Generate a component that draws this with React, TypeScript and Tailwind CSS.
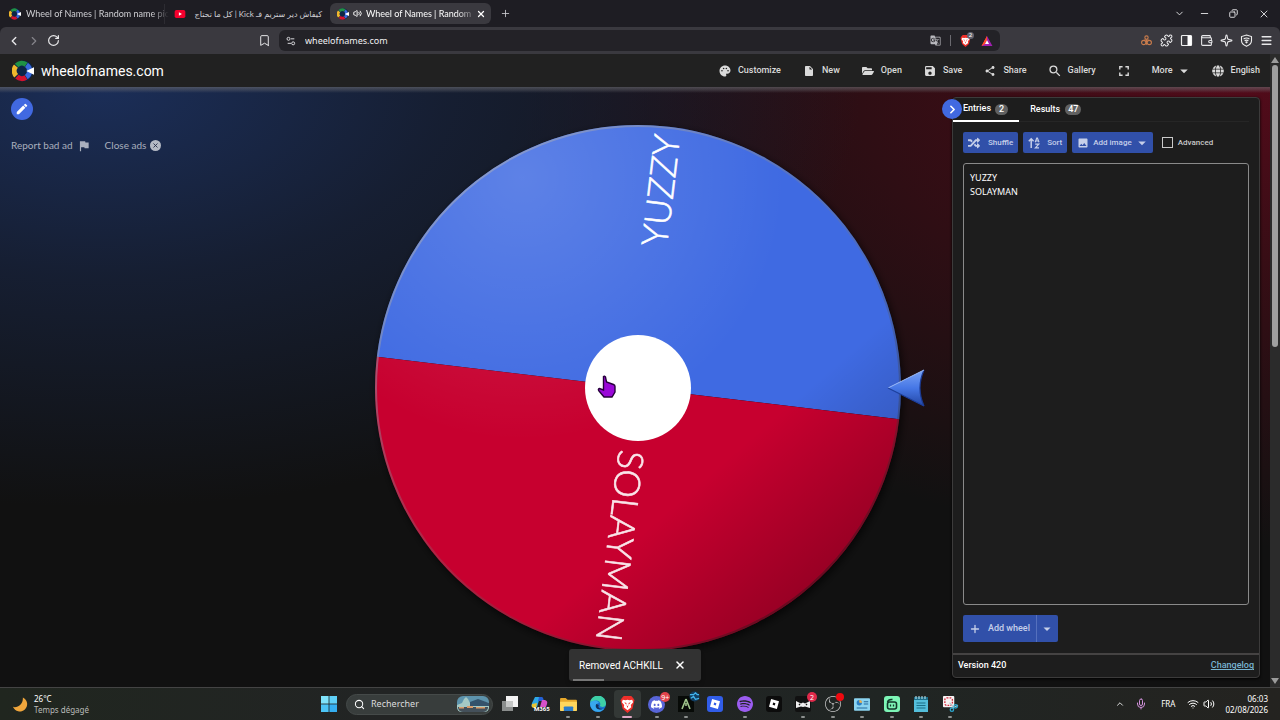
import type { ReactNode } from "react";
import {
  Bookmark,
  ChevronDown,
  ChevronLeft,
  ChevronRight,
  ChevronUp,
  Copy,
  Menu,
  Mic,
  Minus,
  Plus,
  Puzzle,
  RotateCw,
  Search,
  Sparkle,
  Volume2,
  Wallet,
  Wifi,
  X,
} from "lucide-react";
import {
  MdArrowDropDown,
  MdEdit,
  MdFlag,
  MdFullscreen,
  MdGTranslate,
  MdImage,
  MdInsertDriveFile,
  MdPalette,
  MdSave,
  MdSearch,
  MdShare,
} from "react-icons/md";
import { FaFolderOpen, FaGlobe, FaRandom } from "react-icons/fa";
import { SiDiscord, SiObsstudio, SiRoblox, SiSpotify } from "react-icons/si";

function WheelLogo({ className }: { className: string }) {
  return (
    <svg viewBox="0 0 24 24" className={className} aria-hidden="true">
      <circle cx="12" cy="12" r="11.5" fill="#0c2547" />
      <g fill="none" strokeWidth="5.5">
        <path d="M4.3 6.6A8 8 0 0 0 4.6 17.2" stroke="#f0b72c" />
        <path d="M5 5.9A8 8 0 0 1 15.4 5" stroke="#1f9246" />
        <path d="M5.4 18.2A8 8 0 0 0 15.2 19" stroke="#d3122d" />
        <path d="M15.8 5.3A8 8 0 0 1 15.6 18.6" stroke="#3969dd" />
      </g>
      <path d="M15.5 12 24 8v8z" fill="#fff" />
    </svg>
  );
}

function BraveLion({ className }: { className: string }) {
  return (
    <svg viewBox="0 0 16 18" className={className} aria-label="Brave" role="img">
      <path d="M4 0h8l2 2 1.5 2.5L15 6l-1.8 7.5L8 18l-5.2-4.5L1 6 .5 4.5 2 2z" fill="#ee2f2a" />
      <path d="M3 4l3 .5L8 4l2 .5 3-.5 1 2.5-2.5 3 .5 2.5L8 15l-4-3 .5-2.5L2 6.5z" fill="#fff" />
      <path d="M4.5 6.5 7 7.5l-.7 2L8 10.5l1.7-1-.7-2 2.5-1L9 9.5 8 13l-1-3.5z" fill="#ee2f2a" />
    </svg>
  );
}

function TabStrip() {
  return (
    <div className="flex h-[27px] items-center bg-[#1e1d23] pl-1 text-[9px] text-[#cfcfd3]">
      <div className="flex min-w-0 items-center gap-[2px]">
        <div className="flex h-5 w-[161px] items-center gap-[5px] border-r border-[#2d2c32] pl-[5px]">
          <WheelLogo className="size-3 shrink-0" />
          <span className="font-[Lato,sans-serif] whitespace-nowrap [mask-image:linear-gradient(to_right,black_88%,transparent)]">
            Wheel of Names | Random name pic
          </span>
        </div>
        <div className="flex h-5 w-[161px] items-center gap-1 pr-[6px] pl-[7px]">
          <svg viewBox="0 0 12 9" className="h-2 w-3 shrink-0" aria-hidden="true">
            <rect width="12" height="9" rx="2" fill="#f4002d" />
            <path d="M4.7 2.4v4.2L8.2 4.5z" fill="#fff" />
          </svg>
          <span
            dir="rtl"
            className="min-w-0 flex-1 font-[Lato,'DejaVu_Sans',sans-serif] text-[8px] whitespace-nowrap"
          >
            كيفاش دير ستريم فـ Kick | كل ما تحتاج
          </span>
        </div>
        <div className="flex h-[21px] w-[161px] items-center gap-1 rounded-md bg-[#3a393f] pr-[5px] pl-[7px] text-white">
          <WheelLogo className="size-3 shrink-0" />
          <Volume2 className="size-[9px] shrink-0" strokeWidth={2.5} />
          <span className="min-w-0 flex-1 font-[Lato,sans-serif] whitespace-nowrap [mask-image:linear-gradient(to_right,black_85%,transparent_105%)]">
            Wheel of Names | Random na
          </span>
          <button aria-label="Close tab">
            <X className="size-[10px]" strokeWidth={3} />
          </button>
        </div>
        <button aria-label="New tab" className="ml-[7px]">
          <Plus className="size-[11px]" strokeWidth={1.8} />
        </button>
      </div>
      <div className="ml-auto flex items-center pr-[10px] text-[#e4e4e6]">
        <button aria-label="Search tabs"><ChevronDown className="size-[11px]" /></button>
        <button aria-label="Minimize" className="ml-[14px]"><Minus className="size-[11px]" /></button>
        <button aria-label="Restore" className="ml-[19px]"><Copy className="size-[9px] -scale-x-100" strokeWidth={2.5} /></button>
        <button aria-label="Close window" className="ml-[20px]"><X className="size-[12px]" strokeWidth={1.8} /></button>
      </div>
    </div>
  );
}

function AddressBar() {
  return (
    <div className="grid h-[27px] grid-cols-[279fr_721fr_280fr] items-center rounded-t-md bg-[#3a393f] text-[#e8e8ea]">
      <div className="flex items-center gap-[6px] pr-2 pl-[7px]">
        <button aria-label="Back"><ChevronLeft className="size-[14px]" strokeWidth={2.4} /></button>
        <button aria-label="Forward" className="text-[#85848a]"><ChevronRight className="size-[14px]" /></button>
        <button aria-label="Reload"><RotateCw className="size-[13px]" strokeWidth={2.2} /></button>
        <button aria-label="Bookmark" className="ml-auto"><Bookmark className="size-[13px]" strokeWidth={1.8} /></button>
      </div>
      <div className="flex h-[21px] items-center rounded-md bg-[#232227] pr-[6px] pl-[7px]">
        <svg viewBox="0 0 12 12" className="size-[10px]" fill="none" stroke="#d8d8dc" strokeWidth="1.2" aria-hidden="true">
          <circle cx="3" cy="3.4" r="1.8" />
          <path d="M6 3.4h4M2 8.8h4" />
          <circle cx="8.6" cy="8.8" r="1.8" />
        </svg>
        <input
          aria-label="Address"
          defaultValue="wheelofnames.com"
          className="ml-[9px] min-w-0 flex-1 bg-transparent text-[9px] text-[#f1f1f3] outline-none"
        />
        <MdGTranslate className="size-[11px] text-[#b9b9be]" />
        <span className="mx-[9px] h-[11px] w-px bg-[#6b6a70]" />
        <span className="relative">
          <BraveLion className="h-[12px] w-[11px]" />
          <span className="absolute -top-[3px] left-[7px] flex size-[7px] items-center justify-center rounded-full bg-[#62636f] text-[6px] text-white">
            2
          </span>
        </span>
        <svg viewBox="0 0 12 11" className="mr-[1px] ml-[10px] h-[10px] w-[12px]" aria-hidden="true">
          <path d="M6 0 0 11h6V7.8z" fill="#f0432d" />
          <path d="M6 0l6 11H0l3.6-2.6z" fill="#9e1fae" />
          <path d="M6 0 0 11l3.8-2.2L6 4.6z" fill="#ff4a2a" />
          <path d="M6 4.6 8.3 8.8H3.8z" fill="#fff" />
        </svg>
      </div>
      <div className="flex items-center justify-end gap-[7px] pr-[7px]">
        <svg viewBox="0 0 14 14" className="size-[13px]" fill="none" stroke="#c77b4c" strokeWidth="1.2" aria-label="Cookies" role="img">
          <circle cx="7" cy="3.8" r="1.8" />
          <circle cx="4" cy="9.2" r="2.3" />
          <circle cx="10" cy="9.2" r="2.3" />
          <path d="M7 5.600v6M4.500 6.500h5" />
        </svg>
        <Puzzle className="size-[13px]" strokeWidth={1.9} />
        <svg viewBox="0 0 13 13" className="size-[13px]" aria-hidden="true">
          <rect x="1.5" y="1.5" width="10" height="10" rx="1" fill="none" stroke="#eee" strokeWidth="1.2" />
          <path d="M7.5 1.5h4v10h-4z" fill="#fff" />
        </svg>
        <Wallet className="size-[13px]" strokeWidth={2} />
        <Sparkle className="size-[13px]" strokeWidth={2} />
        <svg viewBox="0 0 13 13" className="size-[13px]" fill="none" stroke="#eee" strokeWidth="1.1" aria-hidden="true">
          <path d="M6.5 1 11.5 2.6v4c0 2.8-2 4.6-5 5.7-3-1.1-5-2.9-5-5.7v-4z" />
          <path d="M3.6 5c1.8-1.3 4-1.3 5.8 0M4.6 6.8c1.2-.8 2.6-.8 3.8 0" />
          <circle cx="6.5" cy="8.3" r=".6" fill="#eee" />
        </svg>
        <button aria-label="Menu"><Menu className="size-[13px]" strokeWidth={2.6} /></button>
      </div>
    </div>
  );
}

function NavItem({ icon, label }: { icon: ReactNode; label: string }) {
  return (
    <button className="flex items-center gap-[7px]">
      {icon}
      {label}
    </button>
  );
}

function SiteHeader() {
  return (
    <header className="flex h-[33px] items-center justify-between bg-[#212121] pr-[10px] pl-3 font-[Roboto,sans-serif] text-white">
      <a href="#" className="flex items-center gap-[7px] pt-px text-[14px]">
        <WheelLogo className="size-[22px]" />
        wheelofnames.com
      </a>
      <nav className="flex items-center gap-[22px] text-[9px] font-medium text-[#dadada]">
        <NavItem icon={<MdPalette className="size-3 scale-110" />} label="Customize" />
        <NavItem icon={<MdInsertDriveFile className="size-3" />} label="New" />
        <NavItem icon={<FaFolderOpen className="size-3" />} label="Open" />
        <NavItem icon={<MdSave className="size-3 scale-110" />} label="Save" />
        <NavItem icon={<MdShare className="size-3" />} label="Share" />
        <NavItem icon={<MdSearch className="size-3 scale-125" />} label="Gallery" />
        <button aria-label="Fullscreen"><MdFullscreen className="size-3 scale-140" /></button>
        <button className="flex items-center gap-[5px]">
          More
          <MdArrowDropDown className="size-3 scale-150" />
        </button>
        <NavItem icon={<FaGlobe className="size-3" />} label="English" />
      </nav>
    </header>
  );
}

function Wheel() {
  return (
    <svg viewBox="0 0 550 528" className="block h-auto w-full overflow-visible" role="img" aria-label="Wheel with two entries">
      <defs>
        <radialGradient id="light" cx="0.28" cy="0.1" r="0.5">
          <stop offset="0" stopColor="#fff" stopOpacity=".16" />
          <stop offset="1" stopColor="#fff" stopOpacity="0" />
        </radialGradient>
        <linearGradient id="shade" x1="0.15" y1="0.1" x2="0.85" y2="0.9">
          <stop offset=".7" stopColor="#000" stopOpacity="0" />
          <stop offset="1" stopColor="#000" stopOpacity=".26" />
        </linearGradient>
        <linearGradient id="rim" x1="0.1" y1="0" x2="0.9" y2="1">
          <stop offset="0" stopColor="#a9b4d4" stopOpacity=".7" />
          <stop offset=".5" stopColor="#777" stopOpacity=".3" />
          <stop offset="1" stopColor="#000" stopOpacity=".4" />
        </linearGradient>
        <linearGradient id="arrow" x1="0" y1="0" x2="0" y2="1">
          <stop offset="0" stopColor="#79a2f4" />
          <stop offset=".5" stopColor="#4677e6" />
          <stop offset="1" stopColor="#2346a4" />
        </linearGradient>
        <filter id="shadow" x="-10%" y="-10%" width="120%" height="120%">
          <feDropShadow dx="2" dy="3" stdDeviation="4" floodColor="#000" floodOpacity=".7" />
        </filter>
      </defs>
      <circle cx="263" cy="264" r="263" fill="#000" filter="url(#shadow)" />
      <g transform="rotate(6.8 263 264)">
        <path d="M0 264a263 263 0 0 1 526 0z" fill="#3f6ae2" />
        <path d="M0 264a263 263 0 0 0 526 0z" fill="#c7002f" />
      </g>
      <circle cx="263" cy="264" r="263" fill="url(#light)" />
      <circle cx="263" cy="264" r="263" fill="url(#shade)" />
      <circle cx="263" cy="264" r="262" fill="none" stroke="url(#rim)" strokeWidth="2" />
      <g fill="#fff" stroke="#fff" strokeWidth=".6" textAnchor="end" className="font-[Lato,sans-serif] text-[36px] font-light">
        <text transform="translate(263 264) rotate(-83.2)" x="255" y="12">YUZZY</text>
        <text transform="translate(263 264) rotate(96.8)" x="255" y="12" opacity=".9">SOLAYMAN</text>
      </g>
      <circle cx="263" cy="264" r="53" fill="#fff" />
      <path d="M513 264 549 246Q541 264 549 282z" fill="url(#arrow)" />
      <path d="M549 246Q541 264 549 282" fill="none" stroke="#1b3a92" strokeWidth="1.2" />
      <path d="M549 246 513 264" stroke="#9dbcf8" strokeWidth="1" />
      <path d="M513 264 549 282" stroke="#1d3f9c" strokeWidth="1.2" />
      <path
        d="M228.5 252.5q1-1 2 .5l1 5 7 2.5q1.5.6 1.5 2v5.500l-3 5h-8l-5-6q-1.500-2 .5-2.500l4 1.500z"
        fill="#9a08d8"
        stroke="#26003a"
        strokeWidth="1.4"
      />
    </svg>
  );
}

function ActionButton({ children }: { children: ReactNode }) {
  return (
    <button className="flex h-[21px] items-center rounded-[2px] bg-[#3150a9] px-[5px] text-[#c6cfe9]">{children}</button>
  );
}

function EntriesPanel() {
  return (
    <aside className="relative flex h-full flex-col rounded-[4px] border border-[#3c3b3b] bg-[#1d1d1d] font-[Roboto,sans-serif] text-[9px] text-white shadow-[0_1px_3px_#000]">
      <div className="flex h-6 pr-[10px]" role="tablist">
        <button role="tab" aria-selected="true" className="flex items-center gap-1 border-b-2 border-white pr-[11px] pl-[10px] font-medium">
          Entries
          <span className="rounded-full bg-[#616161] px-1 leading-[11px]">2</span>
        </button>
        <div className="flex flex-1 border-b border-[#262626]">
          <button role="tab" aria-selected="false" className="flex items-center gap-[5px] pl-[11px] font-medium">
            Results
            <span className="rounded-full bg-[#616161] px-[3px] leading-[11px]">47</span>
          </button>
        </div>
      </div>
      <button
        aria-label="Hide panel"
        className="absolute top-[1px] -left-[11px] flex size-5 items-center justify-center rounded-full bg-[#4169e1]"
      >
        <ChevronRight className="size-[13px]" strokeWidth={3} />
      </button>

      <div className="flex flex-1 flex-col gap-[10px] px-[10px] pt-[10px] pb-[11px]">
        <div className="flex items-center gap-[5px] text-[8px] font-medium">
          <ActionButton>
            <FaRandom className="size-3" />
            <span className="ml-2">Shuffle</span>
          </ActionButton>
          <ActionButton>
            <svg viewBox="0 0 12 12" className="size-3" fill="none" stroke="currentColor" strokeWidth="1.5" aria-hidden="true">
              <path d="M3.2 11V1.8M.8 4.200l2.400-2.400 2.400 2.400" />
              <path d="M7.2 5.2 8.8 1h.6L11 5.2M7.6 4h3M7.2 7.2h3.6L7.4 10.8H11" strokeWidth="1.2" />
            </svg>
            <span className="ml-[7px]">Sort</span>
          </ActionButton>
          <ActionButton>
            <MdImage className="size-3" />
            <span className="mr-1 ml-1">Add image</span>
            <MdArrowDropDown className="size-3 scale-150" />
          </ActionButton>
          <label className="ml-1 flex items-center gap-[5px] text-[#c9c9c9]">
            <input type="checkbox" className="size-[11px] appearance-none border border-[#c9c9c9]" />
            Advanced
          </label>
        </div>
        <textarea
          aria-label="Entries"
          defaultValue={"YUZZY\nSOLAYMAN"}
          className="w-full flex-1 resize-none rounded-[3px] border border-[#8a8a8a] bg-[#1d1d1d] px-[6px] py-[7px] font-['Noto_Sans',sans-serif] text-[9px] leading-[14px] text-white outline-none"
        />
        <div className="flex h-[27px] w-fit rounded-[2px] bg-[#3150a9] font-medium text-[#c6cfe9]">
          <button className="flex items-center gap-[7px] border-r border-[#5570bd] px-[6px]">
            <Plus className="size-3" strokeWidth={2.6} />
            Add wheel
          </button>
          <button aria-label="Add wheel options" className="flex w-[21px] items-center justify-center">
            <MdArrowDropDown className="size-3 scale-140" />
          </button>
        </div>
      </div>
      <footer className="flex h-6 items-center justify-between border-t-2 border-[#454343] px-[5px] font-medium">
        <span>Version 420</span>
        <a href="#" className="text-[#78b4d2] underline">Changelog</a>
      </footer>
    </aside>
  );
}

function AppIcon({ children, dot = true, active = false, badge }: { children: ReactNode; dot?: boolean; active?: boolean; badge?: ReactNode }) {
  return (
    <button
      className={
        active
          ? "relative mx-[1px] flex h-7 items-center justify-center rounded bg-[#333836]"
          : "relative mx-[1px] flex h-7 items-center justify-center"
      }
    >
      {children}
      {badge}
      {dot && (
        <span
          className={
            active
              ? "absolute bottom-0 h-[2px] w-[10px] rounded bg-[#e0a8c4]"
              : "absolute bottom-0 h-[2px] w-1 rounded bg-[#8d908f]"
          }
        />
      )}
    </button>
  );
}

function Taskbar() {
  return (
    <footer className="grid h-[33px] grid-cols-[1fr_auto_1fr] items-center border-t border-[#444] bg-[linear-gradient(to_right,#20261f,#222424_30%,#202523_70%,#242320)] text-white">
      <div className="flex items-center gap-[5px] pl-3">
        <svg viewBox="0 0 18 18" className="size-[17px]" aria-hidden="true">
          <path d="M11.5 1.5a7.8 7.8 0 1 1-10.5 10c5 1.5 11-3 10.5-10z" fill="#f0a63c" />
        </svg>
        <div className="text-[8px] leading-[11px]">
          <div>26°C</div>
          <div className="text-[#b9bab8]">Temps dégagé</div>
        </div>
      </div>
      <div className="flex items-center">
        <button aria-label="Start" className="flex w-[27px] justify-center">
          <svg viewBox="0 0 16 16" className="size-4" aria-hidden="true">
            <path d="M0 0h7.6v7.6H0z" fill="#7fe3fb" />
            <path d="M8.4 0H16v7.6H8.4z" fill="#5fd0f7" />
            <path d="M0 8.4h7.6V16H0z" fill="#4cc4f5" />
            <path d="M8.4 8.4H16V16H8.4z" fill="#35aef0" />
          </svg>
        </button>
        <label className="mr-[2px] ml-1 flex h-[21px] w-[147px] items-center gap-[6px] rounded-full border border-[#454a49] bg-[#383d3c] pr-[3px] pl-[7px]">
          <Search className="size-[11px] shrink-0" strokeWidth={2.2} />
          <input
            aria-label="Rechercher"
            placeholder="Rechercher"
            className="min-w-0 flex-1 bg-transparent text-[9px] outline-none placeholder:text-[#dcdcdc]"
          />
          <svg viewBox="0 0 32 16" className="h-4 w-8 shrink-0" aria-hidden="true">
            <rect width="32" height="16" rx="6" fill="#5d93ac" />
            <path d="M0 9l5-2 2-4 2-2 2 2 2 4 7-3 12 3v4q0 5-5 5H5q-5 0-5-5z" fill="#a5c9c4" />
            <path d="M13 6l8-3 11 4v3H13z" fill="#34526b" />
            <path d="M1 11h30v1q-1 4-5 4H6q-4 0-5-4z" fill="#44505a" />
            <path d="M2 11h5v1.5H2zM10 10h6v2h-6zM19 11h9v1.5h-9z" fill="#d99b6a" />
          </svg>
        </label>
        <div className="grid w-[470px] grid-cols-16">
          <AppIcon dot={false}>
            <svg viewBox="0 0 18 16" className="h-4 w-[18px]" aria-label="Task view" role="img">
              <rect x="5" y="0" width="12" height="11" fill="#f3f3f3" />
              <rect x="1" y="5" width="11" height="10" fill="#8a8d8c" />
              <rect x="5" y="5" width="7" height="6" fill="#c4c6c5" />
            </svg>
          </AppIcon>
          <AppIcon dot={false}>
            <svg viewBox="0 0 18 18" className="size-[18px] overflow-visible" aria-label="Microsoft 365" role="img">
              <path d="M5 2h5L7 12H2Q1 11 2 8z" fill="#2da9e8" />
              <path d="M9 2h3q1 0 2 4H8z" fill="#2460d6" />
              <path d="M12 5h3q3 1 2 4l-1 3h-6z" fill="#d650c8" />
              <path d="M2 9l5-1-1 5H4Q1 13 2 9z" fill="#e9c432" />
              <text x="4" y="16" fill="#fff" className="font-[Roboto,sans-serif] text-[6px] font-bold">M365</text>
            </svg>
          </AppIcon>
          <AppIcon>
            <svg viewBox="0 0 18 16" className="h-[15px] w-[17px]" aria-label="Explorer" role="img">
              <path d="M0 2q0-1 1-1h5l2 2h9q1 0 1 1v10H0z" fill="#e8a92b" />
              <path d="M0 5h18v9q0 1-1 1H1q-1 0-1-1z" fill="#ffd65c" />
              <path d="M4 15v-4q0-1 1-1h8q1 0 1 1v4z" fill="#2b7cc9" />
            </svg>
          </AppIcon>
          <AppIcon>
            <svg viewBox="0 0 18 18" className="size-4" aria-label="Edge" role="img">
              <circle cx="9" cy="9" r="9" fill="#1874cf" />
              <path d="M0 8a9 9 0 0 1 18 1c0 4-6 4-7 2 2-3-1-6-4-6S1 6 0 8z" fill="#3ed0a6" />
              <path d="M0 8C2 4 9 4 10 8c-4 0-4 5 0 7 2 1 5 0 6-1-5 7-16 4-16-6z" fill="#38a8ee" />
              <path d="M7 9c-2 4 2 8 8 5-3 1-7-1-5-4z" fill="#12305c" />
            </svg>
          </AppIcon>
          <AppIcon active>
            <BraveLion className="h-[17px] w-[15px]" />
          </AppIcon>
          <AppIcon
            badge={
              <span className="absolute top-[2px] right-0 flex size-[10px] items-center justify-center rounded-full bg-[#e2444b] text-[7px] leading-none">
                9+
              </span>
            }
          >
            <span className="flex size-[17px] items-center justify-center rounded-full bg-[#5865d8]">
              <SiDiscord className="size-[11px]" />
            </span>
          </AppIcon>
          <AppIcon
            badge={
              <svg viewBox="0 0 12 12" className="absolute top-px right-0 size-[11px]" aria-hidden="true">
                <circle cx="6" cy="6" r="5.5" fill="#123f63" />
                <path d="M1 4h4l2-2 2 2h2M2 8l3-2 2 3 4-1" fill="none" stroke="#43b6ef" strokeWidth="1.4" />
              </svg>
            }
          >
            <svg viewBox="0 0 16 16" className="size-4" aria-hidden="true">
              <rect width="16" height="16" fill="#070a07" />
              <path d="M8 3 4 13M8 3l4 10M8 7v3" stroke="#a0c58c" strokeWidth="1.6" fill="none" />
            </svg>
          </AppIcon>
          <AppIcon dot={false}>
            <span className="flex size-4 items-center justify-center rounded-[3px] bg-[#315de8]">
              <SiRoblox className="size-[10px]" />
            </span>
          </AppIcon>
          <AppIcon><SiSpotify className="size-4 text-[#9b5cf0]" /></AppIcon>
          <AppIcon dot={false}>
            <span className="flex size-4 items-center justify-center rounded-[3px] bg-[#0c0c0c]">
              <SiRoblox className="size-[10px]" />
            </span>
          </AppIcon>
          <AppIcon
            badge={
              <span className="absolute top-[2px] right-0 flex size-[10px] items-center justify-center rounded-full bg-[#e0294a] text-[7px] leading-none">
                2
              </span>
            }
          >
            <svg viewBox="0 0 16 16" className="size-4" aria-hidden="true">
              <rect width="16" height="16" rx="2" fill="#111" />
              <path d="M1 5l5 2.5L8 6.5l2 1L15 5v7l-5-1.5-2 .5-2-.5L1 12z" fill="#eee" />
              <path d="M4 8l1 1M12 8l-1 1" stroke="#111" strokeWidth="1.4" />
            </svg>
          </AppIcon>
          <AppIcon badge={<span className="absolute top-[3px] right-[3px] size-[8px] rounded-full bg-[#f0090f]" />}>
            <SiObsstudio className="size-4 text-[#c9c9c9]" />
          </AppIcon>
          <AppIcon>
            <svg viewBox="0 0 18 14" className="h-[13px] w-4" aria-hidden="true">
              <rect width="18" height="14" rx="1" fill="#8ad3f0" />
              <circle cx="6" cy="5" r="3" fill="#2b7fc4" />
              <path d="M6 2v3h3A3 3 0 0 0 6 2z" fill="#f5b54c" />
              <path d="M11 4h5M11 6.5h5M3 11h12" stroke="#256a9c" strokeWidth="1.2" />
            </svg>
          </AppIcon>
          <AppIcon>
            <svg viewBox="0 0 16 16" className="size-4" aria-hidden="true">
              <rect width="16" height="16" rx="3" fill="#7df5b6" />
              <rect x="3.5" y="6" width="9" height="7" rx="2" fill="none" stroke="#12382a" strokeWidth="1.6" />
              <path d="M3.5 6q1-3 5-2.5" fill="none" stroke="#12382a" strokeWidth="1.6" />
              <path d="M6.5 8.5v2M9.5 8.5v2" stroke="#12382a" strokeWidth="1.3" />
            </svg>
          </AppIcon>
          <AppIcon>
            <svg viewBox="0 0 14 16" className="h-4 w-[14px]" aria-hidden="true">
              <path d="M0 1h14v15H0z" fill="#54bedb" />
              <path d="M0 1h14v3H0z" fill="#1c6e8a" />
              <path d="M2 0v3M5 0v3M8 0v3M11 0v3" stroke="#c9eef6" />
              <path d="M2.5 7h9M2.5 9.5h9M2.5 12h9" stroke="#1a6f88" strokeWidth="1.1" />
            </svg>
          </AppIcon>
          <AppIcon>
            <svg viewBox="0 0 18 17" className="h-4 w-[17px]" aria-hidden="true">
              <rect x="1" width="12" height="12" rx="1" fill="#f6f3f3" />
              <rect x="3" y="2" width="8" height="8" rx="2" fill="none" stroke="#d22b3e" strokeWidth="1.4" strokeDasharray="1.8 1.2" />
              <path d="M8 7l5 6M17 10l-7 3" stroke="#b9c6cc" strokeWidth="1.4" />
              <circle cx="14.5" cy="11" r="1.8" fill="none" stroke="#2ba7cf" strokeWidth="1.4" />
              <circle cx="10.5" cy="14.5" r="1.8" fill="none" stroke="#2ba7cf" strokeWidth="1.4" />
            </svg>
          </AppIcon>
        </div>
      </div>
      <div className="flex items-center justify-end pr-3 text-[8px]">
        <ChevronUp className="size-[10px]" />
        <Mic className="ml-[10px] size-3 text-[#d292dc]" />
        <span className="ml-[14px]">FRA</span>
        <Wifi className="ml-3 size-3" />
        <Volume2 className="ml-1 size-3" />
        <div className="ml-[10px] text-right leading-[11px]">
          <div>06:03</div>
          <div>02/08/2026</div>
        </div>
      </div>
    </footer>
  );
}

export default function App() {
  return (
    <div className="flex min-h-screen flex-col overflow-hidden bg-[#1e1d23] font-['Noto_Sans','DejaVu_Sans',sans-serif]">
      <TabStrip />
      <AddressBar />
      <div className="flex flex-1 bg-[#111]">
        <div className="flex min-w-0 flex-1 flex-col">
          <SiteHeader />
          <main className="relative grid flex-1 grid-cols-[375fr_550fr_335fr] bg-[#111] bg-[linear-gradient(to_bottom,rgba(110,110,115,.6),rgba(110,110,115,.35)_3px,transparent_6px),radial-gradient(ellipse_760px_420px_at_8%_0%,#1b2e58,rgba(24,36,64,.7)_45%,transparent),radial-gradient(ellipse_740px_460px_at_98%_0%,#520b1a,rgba(66,12,22,.75)_40%,transparent)] pr-[10px]">
            <section className="pt-[11px] pl-[11px] font-[Lato,sans-serif] text-[10px] text-[#a9afbd]">
              <button aria-label="Edit title" className="flex size-[22px] items-center justify-center rounded-full bg-[#4169e1] text-white">
                <MdEdit className="size-[14px]" />
              </button>
              <div className="mt-[18px] flex items-center gap-[14px]">
                <button className="flex items-center gap-1">
                  Report bad ad
                  <MdFlag className="size-[14px]" />
                </button>
                <button className="flex items-center gap-1">
                  Close ads
                  <span className="flex size-[11px] items-center justify-center rounded-full bg-[#b4b9c4] text-[#222c45]">
                    <X className="size-[7px]" strokeWidth={3} />
                  </span>
                </button>
              </div>
            </section>
            <section className="pt-[37px]">
              <Wheel />
            </section>
            <section className="pt-[10px] pb-[9px] pl-[27px]">
              <EntriesPanel />
            </section>
            <div
              role="status"
              className="absolute bottom-[6px] left-1/2 flex h-8 w-[132px] -translate-x-1/2 items-center justify-between rounded-[3px] bg-[#323232] px-[10px] font-[Roboto,sans-serif] text-[10px] text-white shadow-md"
            >
              Removed ACHKILL
              <button aria-label="Dismiss" className="mr-[5px]">
                <X className="size-[12px]" strokeWidth={3} />
              </button>
              <span className="absolute bottom-0 left-1 h-[2px] w-[31px] bg-[#777]" />
            </div>
          </main>
        </div>
        <div className="flex w-[10px] flex-col items-center bg-[#2b2b2b] py-[3px]">
          <svg viewBox="0 0 8 6" className="h-[6px] w-2" aria-hidden="true"><path d="M4 0l4 6H0z" fill="#9b9b9b" /></svg>
          <div className="mt-[2px] h-[45%] w-[6px] rounded-full bg-[#9f9f9f]" />
          <svg viewBox="0 0 8 6" className="mt-auto h-[6px] w-2" aria-hidden="true"><path d="M4 6l4-6H0z" fill="#9b9b9b" /></svg>
        </div>
      </div>
      <Taskbar />
    </div>
  );
}
